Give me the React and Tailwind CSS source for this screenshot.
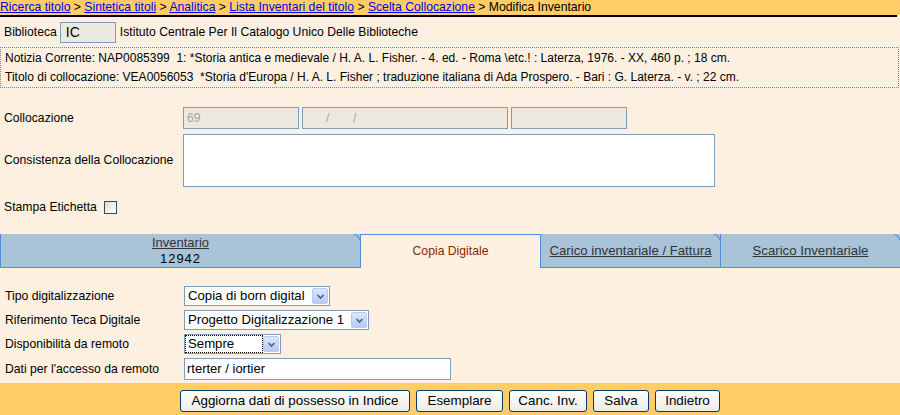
import React from 'react'

const crumbs = ['Ricerca titolo', 'Sintetica titoli', 'Analitica', 'Lista Inventari del titolo', 'Scelta Collocazione']

function Chevron() {
  return (
    <span className="flex items-center justify-center w-[16px] h-[16px] mr-[1px] rounded-[2px] border border-[#B9CCF5] bg-gradient-to-b from-[#DCE6FC] to-[#B7CAF5]">
      <svg width="9" height="7" viewBox="0 0 9 7">
        <path d="M1.5 2 L4.5 5 L7.5 2" fill="none" stroke="#4D6185" strokeWidth="1.6" />
      </svg>
    </span>
  )
}

function Select({ value, width, focused }) {
  return (
    <div className={`flex items-center h-[20px] border border-[#7F9DB9] bg-white ${width}`}>
      <div className="flex-1 h-full flex items-center px-[1px]">
        <span className={`flex-1 h-[16px] leading-[15px] pl-[2px] text-[13.2px] whitespace-nowrap ${focused ? 'outline outline-1 outline-dotted outline-black' : ''}`}>{value}</span>
      </div>
      <Chevron />
    </div>
  )
}

function Corner() {
  return <span className="absolute top-0 right-0 w-[6px] h-[6px] border-t border-r border-[#4A8FE0] rounded-tr-[6px]" />
}

export default function App() {
  return (
    <div className="w-[900px] h-[415px] flex flex-col bg-[#FDF0E1] text-[12.2px] text-black overflow-hidden" style={{ fontFamily: '"Liberation Sans", Arial, sans-serif' }}>
      {/* breadcrumb */}
      <div className="h-[15px] leading-[15px] bg-[#FFCC66] whitespace-nowrap">
        {crumbs.map(c => (
          <span key={c}>
            <a className="text-[#0000EE] underline">{c}</a>
            <span> &gt; </span>
          </span>
        ))}
        <span>Modifica Inventario</span>
      </div>
      <div className="h-[2px] bg-black mr-[3px]" />

      {/* biblioteca */}
      <div className="mt-[5px] flex items-center h-[21px] pl-[4px]">
        <span>Biblioteca</span>
        <div className="ml-[3px] w-[56px] h-[21px] border border-[#7F9DB9] bg-[#ECE9E0] pl-[5px] leading-[19px] text-[14px]">IC</div>
        <span className="ml-[4px]">Istituto Centrale Per Il Catalogo Unico Delle Biblioteche</span>
      </div>

      {/* notizia */}
      <div className="mt-[4px] mr-[1px] h-[41px] border border-dotted border-[#4A8FE0] pl-[4px] pt-[1px] leading-[19px] text-[12px] whitespace-nowrap">
        <div>Notizia Corrente: NAP0085399&nbsp; 1: *Storia antica e medievale / H. A. L. Fisher. - 4. ed. - Roma \etc.! : Laterza, 1976. - XX, 460 p. ; 18 cm.</div>
        <div>Titolo di collocazione: VEA0056053&nbsp; *Storia d'Europa / H. A. L. Fisher ; traduzione italiana di Ada Prospero. - Bari : G. Laterza. - v. ; 22 cm.</div>
      </div>

      {/* collocazione */}
      <div className="mt-[19px] flex items-center h-[22px]">
        <span className="w-[183px] pl-[4px]">Collocazione</span>
        <div className="flex gap-[3px]">
          <div className="w-[116px] h-[22px] border border-[#7F9DB9] bg-[#ECE9E0] pl-[3px] leading-[20px] text-[#A5A59D]">69</div>
          <div className="w-[206px] h-[22px] border border-[#7F9DB9] bg-[#ECE9E0] pl-[23px] leading-[20px] text-[#A5A59D] whitespace-pre">/       /</div>
          <div className="w-[116px] h-[22px] border border-[#7F9DB9] bg-[#ECE9E0]" />
        </div>
      </div>

      <div className="mt-[5px] flex items-center h-[53px]">
        <span className="w-[183px] pl-[4px]">Consistenza della Collocazione</span>
        <div className="w-[532px] h-[53px] border border-[#7F9DB9] bg-white" />
      </div>

      <div className="mt-[14px] flex items-center h-[13px] pl-[4px]">
        <span className="w-[100px]">Stampa Etichetta</span>
        <span className="w-[13px] h-[13px] border border-[#1C5180] bg-gradient-to-br from-[#DCDCD7] to-white" />
      </div>

      {/* tabs */}
      <div className="mt-[20px] flex h-[34px]">
        <div className="relative w-[360px] bg-[#A9C3D9] border-l border-b border-[#4A8FE0] flex flex-col items-center justify-center leading-[16px]">
          <a className="underline text-[#333333] text-[13px]">Inventario</a>
          <span className="tracking-[1px] text-[13px]">12942</span>
          <Corner />
        </div>
        <div className="w-[181px] border-l border-t border-r border-[#4A8FE0] flex items-center justify-center text-[#8B2500]">
          Copia Digitale
        </div>
        <div className="relative w-[180px] bg-[#A9C3D9] border-r border-b border-[#4A8FE0] flex items-center justify-center text-[13.2px]">
          <a className="underline text-[#333333]">Carico inventariale / Fattura</a>
          <Corner />
        </div>
        <div className="relative flex-1 bg-[#A9C3D9] border-b border-[#4A8FE0] flex items-center justify-center text-[13.2px]">
          <a className="underline text-[#333333]">Scarico Inventariale</a>
          <Corner />
        </div>
      </div>

      {/* copia digitale form */}
      <div className="mt-[18px] flex flex-col gap-[4px]">
        <div className="flex items-center">
          <span className="w-[184px] pl-[5px]">Tipo digitalizzazione</span>
          <Select value="Copia di born digital" width="w-[146px]" />
        </div>
        <div className="flex items-center">
          <span className="w-[184px] pl-[5px]">Riferimento Teca Digitale</span>
          <Select value="Progetto Digitalizzazione 1" width="w-[185px]" />
        </div>
        <div className="flex items-center">
          <span className="w-[184px] pl-[5px]">Disponibilità da remoto</span>
          <Select value="Sempre" width="w-[97px]" focused />
        </div>
        <div className="flex items-center">
          <span className="w-[184px] pl-[5px]">Dati per l'accesso da remoto</span>
          <div className="w-[267px] h-[22px] border border-[#7F9DB9] bg-white pl-[2px] leading-[20px] text-[13px]">rterter / iortier</div>
        </div>
      </div>

      {/* bottom bar */}
      <div className="mt-[3px] flex-1 bg-[#FFCC66] flex justify-center gap-[6px] pt-[7px]">
        {[['Aggiorna dati di possesso in Indice', 'w-[230px]'], ['Esemplare', 'w-[87px]'], ['Canc. Inv.', 'w-[78px]'], ['Salva', 'w-[56px]'], ['Indietro', 'w-[65px]']].map(([t, w]) => (
          <button key={t} className={`${w} h-[22px] rounded-[3px] border border-[#003C74] bg-gradient-to-b from-white to-[#ECEBE6] text-[13.4px] leading-[20px] text-black`}>
            {t}
          </button>
        ))}
      </div>
    </div>
  )
}
